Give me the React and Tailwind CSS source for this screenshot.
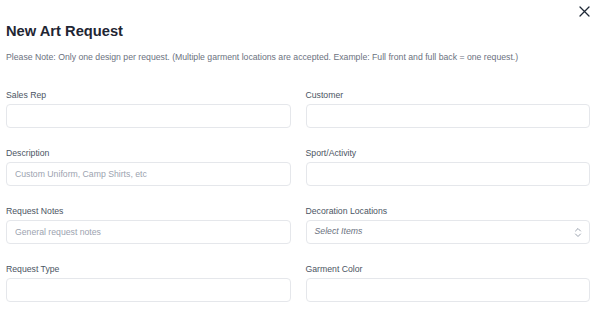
import React from "react";

const fields = [
  { label: "Sales Rep" },
  { label: "Customer" },
  { label: "Description", placeholder: "Custom Uniform, Camp Shirts, etc" },
  { label: "Sport/Activity" },
  { label: "Request Notes", placeholder: "General request notes" },
  { label: "Decoration Locations", select: true },
  { label: "Request Type" },
  { label: "Garment Color" },
];

function Field({ field }) {
  return (
    <div className="flex flex-col">
      <label className="text-[8.7px] leading-[14px] text-[#4b5563]">{field.label}</label>
      {field.select ? (
        <div className="mt-[2px] flex h-[24px] items-center justify-between rounded-[4px] border border-[#e5e7eb] bg-white pl-[8px] pr-[7px]">
          <span className="text-[8.7px] italic text-[#6b7280]">Select Items</span>
          <svg width="8" height="11" viewBox="0 0 8 11" fill="none" stroke="#9ca3af" strokeWidth="1" strokeLinecap="round" strokeLinejoin="round">
            <path d="M1.5 4 L4 1.5 L6.5 4" />
            <path d="M1.5 7 L4 9.5 L6.5 7" />
          </svg>
        </div>
      ) : (
        <input
          type="text"
          placeholder={field.placeholder}
          className="mt-[2px] h-[24px] rounded-[4px] border border-[#e5e7eb] bg-white px-[8px] text-[8.7px] text-gray-700 placeholder:text-[#9ca3af] focus:outline-none"
        />
      )}
    </div>
  );
}

export default function App() {
  return (
    <div className="relative h-[311px] w-[597px] bg-white pl-[6px] pr-[7px] font-['Liberation_Sans',Arial,sans-serif]">
      <button className="absolute right-[7px] top-[5px] flex h-[12px] w-[12px] items-center justify-center text-[#1f2937]">
        <svg width="11" height="11" viewBox="0 0 11 11" stroke="currentColor" strokeWidth="1.3" strokeLinecap="round">
          <path d="M1 1 L10 10 M10 1 L1 10" />
        </svg>
      </button>
      <h1 className="pt-[21px] text-[14.7px] font-bold leading-[20px] text-[#1f2633]">New Art Request</h1>
      <p className="mt-[9px] text-[8.7px] leading-[14px] text-[#6b7280]">
        Please Note: Only one design per request. (Multiple garment locations are accepted. Example: Full front and full back = one request.)
      </p>
      <div className="mt-[24px] grid grid-cols-2 gap-x-[15px] gap-y-[18px]">
        {fields.map((f) => (
          <Field key={f.label} field={f} />
        ))}
      </div>
    </div>
  );
}
